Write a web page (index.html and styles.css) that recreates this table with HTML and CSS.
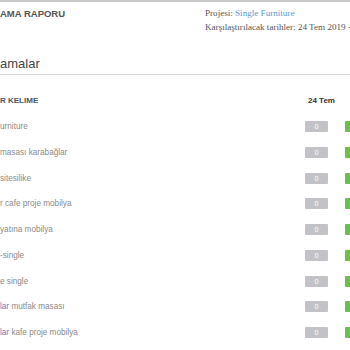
FILE: index.html
```html
<!DOCTYPE html>
<html lang="tr">
<head>
<meta charset="utf-8">
<link rel="stylesheet" href="styles.css">
</head>
<body>
<div class="page">
  <header class="top">
    <div class="report-title">AMA RAPORU</div>
    <div class="meta">
      <div>Projesi: <a class="proj" href="#">Single Furniture</a></div>
      <div>Karşılaştırılacak tarihler: 24 Tem 2019 - 31 Tem 2019</div>
    </div>
  </header>
  <h2 class="section-title">amalar</h2>
  <div class="table">
    <div class="row head">
      <div class="kw">R KELIME</div>
      <div class="c1">24 Tem</div>
      <div class="c2"></div>
    </div>
    <div class="row"><div class="kw">urniture</div><div class="c1"><span class="badge gray">0</span></div><div class="c2"><span class="badge green">0</span></div></div>
    <div class="row"><div class="kw">masası karabağlar</div><div class="c1"><span class="badge gray">0</span></div><div class="c2"><span class="badge green">0</span></div></div>
    <div class="row"><div class="kw">sitesilike</div><div class="c1"><span class="badge gray">0</span></div><div class="c2"><span class="badge green">0</span></div></div>
    <div class="row"><div class="kw">r cafe proje mobilya</div><div class="c1"><span class="badge gray">0</span></div><div class="c2"><span class="badge green">0</span></div></div>
    <div class="row"><div class="kw">yatına mobilya</div><div class="c1"><span class="badge gray">0</span></div><div class="c2"><span class="badge green">0</span></div></div>
    <div class="row"><div class="kw">-single</div><div class="c1"><span class="badge gray">0</span></div><div class="c2"><span class="badge green">0</span></div></div>
    <div class="row"><div class="kw">e single</div><div class="c1"><span class="badge gray">0</span></div><div class="c2"><span class="badge green">0</span></div></div>
    <div class="row"><div class="kw"><a class="kwlink" href="#">lar</a> mutfak masası</div><div class="c1"><span class="badge gray">0</span></div><div class="c2"><span class="badge green">0</span></div></div>
    <div class="row"><div class="kw"><a class="kwlink" href="#">lar</a> kafe proje mobilya</div><div class="c1"><span class="badge gray">0</span></div><div class="c2"><span class="badge green">0</span></div></div>
  </div>
</div>
</body>
</html>
```
FILE: styles.css
```css
html, body {
  margin: 0;
  padding: 0;
  background: #fff;
  overflow: hidden;
}
body {
  width: 350px;
  height: 350px;
  font-family: "Liberation Sans", Arial, sans-serif;
}
.page {
  width: 385px;
  border-top: 2px solid #c9c9c9;
}
.top {
  display: flex;
  height: 40px;
}
.report-title {
  flex: 0 0 205px;
  padding-top: 6px;
  font-size: 9.5px;
  font-weight: bold;
  color: #555;
  line-height: 12px;
}
.meta {
  flex: 0 0 auto;
  padding-top: 5px;
  font-family: "Liberation Serif", "Times New Roman", serif;
  font-size: 9.1px;
  line-height: 13.5px;
  color: #555;
  white-space: nowrap;
}
.proj {
  color: #5b9bd5;
  text-decoration: none;
}
.section-title {
  margin: 0;
  padding-top: 13px;
  height: 19px;
  font-size: 13px;
  font-weight: normal;
  color: #444;
  line-height: 18px;
  border-bottom: 1px solid #d6d6d6;
  margin-bottom: 13px;
}
.row {
  display: grid;
  grid-template-columns: 305px 40px 40px;
  align-items: center;
  height: 25.75px;
}
.head {
  font-size: 8px;
  font-weight: bold;
}
.head .kw {
  font-size: 8px;
  color: #4a5665;
}
.head .c1 {
  color: #333;
  padding-left: 3px;
}
.kw {
  font-size: 8.2px;
  color: #8a8a8a;
  white-space: nowrap;
}
.kwlink {
  color: #7676b8;
  text-decoration: none;
}
.badge {
  display: flex;
  align-items: center;
  justify-content: center;
  width: 23px;
  height: 11px;
  border-radius: 1px;
  font-size: 7px;
  color: #fff;
}
.gray {
  background: #c3c3c7;
}
.green {
  background: #6cbf4c;
}
```
